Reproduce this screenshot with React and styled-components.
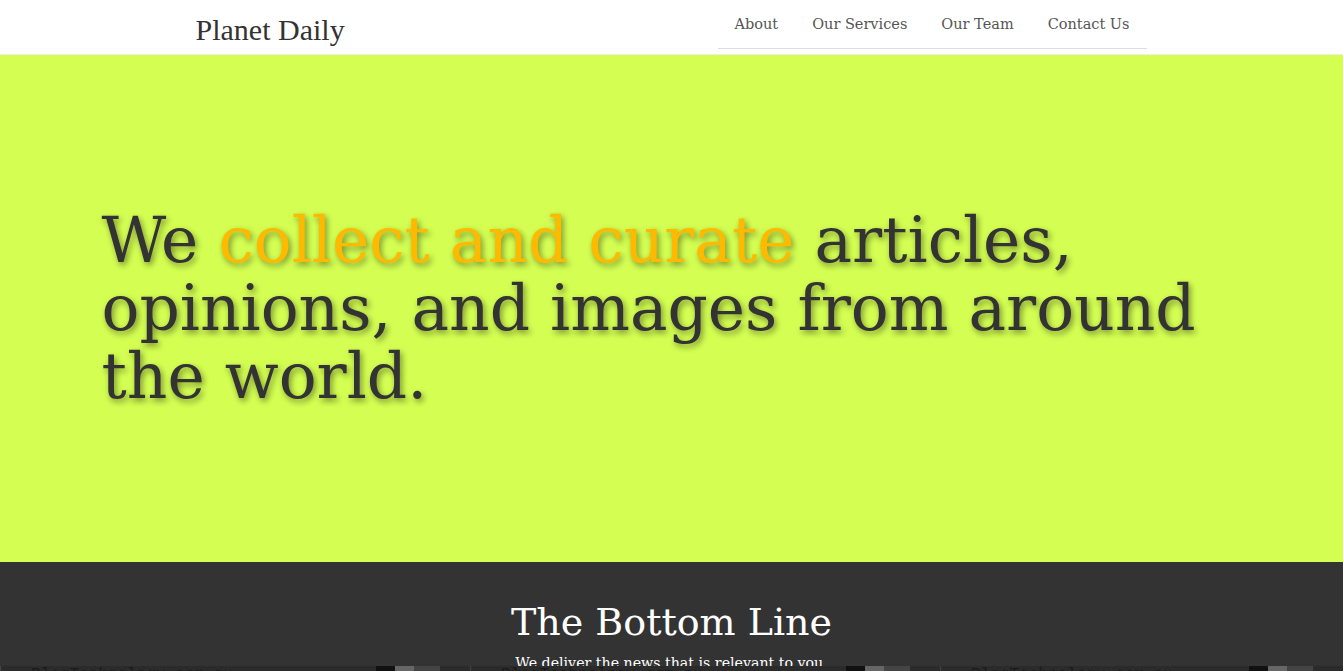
import React from 'react';
import styled, { createGlobalStyle } from 'styled-components';

const GlobalStyle = createGlobalStyle`
  html, body {
    margin: 0;
    padding: 0;
    background: #333;
    font-family: "DejaVu Serif", "Liberation Serif", serif;
    overflow: hidden;
  }
`;

const Page = styled.div`
  height: 671px;
  overflow: hidden;
  display: flex;
  flex-direction: column;
`;

const Navbar = styled.nav`
  height: 54px;
  background: #fff;
  border-bottom: 1px solid #f0ece8;
  display: flex;
  justify-content: center;
  flex-shrink: 0;
`;

const NavInner = styled.div`
  width: 952px;
  display: flex;
  justify-content: space-between;
  align-items: flex-start;
`;

const Brand = styled.a`
  font-family: "Liberation Serif", serif;
  font-size: 30px;
  line-height: 34px;
  color: #333;
  text-decoration: none;
  padding-top: 13px;
`;

const NavList = styled.ul`
  list-style: none;
  margin: 0;
  padding: 0;
  display: flex;
  border-bottom: 1px solid #ddd;
  margin-right: 1px;
`;

const NavItem = styled.li`
  a {
    display: block;
    padding: 14px 17px 14px 17px;
    font-size: 14.5px;
    color: #555;
    text-decoration: none;
    line-height: 20px;
  }
`;

const Hero = styled.section`
  height: 507px;
  background: #d4ff52;
  display: flex;
  justify-content: center;
  align-items: center;
  flex-shrink: 0;
`;

const HeroInner = styled.div`
  width: 1140px;
  padding-bottom: 0px;
`;

const Headline = styled.h1`
  margin: 0;
  font-weight: 400;
  font-size: 63px;
  line-height: 68px;
  color: #333;
  text-shadow: 2px 3px 6px rgba(0, 0, 0, 0.45);
`;

const Highlight = styled.span`
  color: #ffba00;
`;

const Bottom = styled.section`
  background: #333;
  display: flex;
  flex-direction: column;
  align-items: center;
  padding-top: 37px;
  flex: 1;
  position: relative;
`;

const SectionTitle = styled.h2`
  margin: 0;
  font-weight: 400;
  font-size: 38px;
  line-height: 46px;
  color: #fff;
`;

const SectionText = styled.p`
  margin: 8px 0 0;
  font-size: 14.2px;
  line-height: 20px;
  color: #fff;
`;

const CardRow = styled.div`
  position: absolute;
  left: 0;
  right: 0;
  top: 104px;
  height: 40px;
  background: #2b2b2b;
  display: grid;
  grid-template-columns: 470px 470px 1fr;
`;

const Card = styled.div`
  border-left: 1px solid #444;
  padding: 0 0 0 30px;
  display: flex;
  justify-content: space-between;
  font-family: "Liberation Mono", monospace;
  font-size: 16px;
  color: #1a1a1a;
`;

const Thumb = styled.div`
  width: 64px;
  height: 20px;
  margin-right: 30px;
  background: linear-gradient(90deg, #111 0 30%, #666 30% 60%, #444 60%);
`;

export default function App() {
  return (
    <Page>
      <GlobalStyle />
      <Navbar>
        <NavInner>
          <Brand href="#">Planet Daily</Brand>
          <NavList>
            {['About', 'Our Services', 'Our Team', 'Contact Us'].map((l) => (
              <NavItem key={l}>
                <a href="#">{l}</a>
              </NavItem>
            ))}
          </NavList>
        </NavInner>
      </Navbar>
      <Hero>
        <HeroInner>
          <Headline>
            We <Highlight>collect and curate</Highlight> articles, opinions, and images from around the world.
          </Headline>
        </HeroInner>
      </Hero>
      <Bottom>
        <SectionTitle>The Bottom Line</SectionTitle>
        <SectionText>We deliver the news that is relevant to you.</SectionText>
        <CardRow>
          {[0, 1, 2].map((i) => (
            <Card key={i}>
              <span>PlagTechnology.com.au</span>
              <Thumb />
            </Card>
          ))}
        </CardRow>
      </Bottom>
    </Page>
  );
}
